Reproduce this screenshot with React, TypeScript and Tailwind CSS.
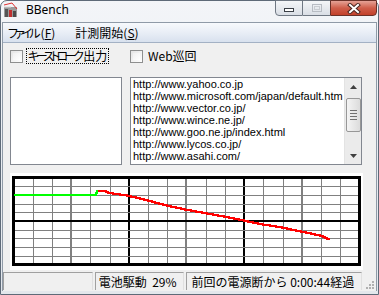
import React from 'react';

const urls = [
  'http://www.yahoo.co.jp',
  'http://www.microsoft.com/japan/default.htm',
  'http://www.vector.co.jp/',
  'http://www.wince.ne.jp/',
  'http://www.goo.ne.jp/index.html',
  'http://www.lycos.co.jp/',
  'http://www.asahi.com/',
  'http://www.nikkei.co.jp/',
];

const jp = "font-['Noto_Sans_CJK_JP','Noto_Sans',sans-serif]";

function stairs(pts: [number, number][]) {
  let d = `M${pts[0][0]} ${Math.round(pts[0][1])}`;
  let cy = Math.round(pts[0][1]);
  for (let i = 1; i < pts.length; i++) {
    const [x0, y0] = pts[i - 1];
    const [x1, y1] = pts[i];
    for (let x = Math.ceil(x0); x <= x1; x++) {
      const y = Math.round(y0 + ((y1 - y0) * (x - x0)) / (x1 - x0 || 1));
      if (y !== cy) {
        d += ` H${x} V${y}`;
        cy = y;
      }
    }
    d += ` H${x1}`;
  }
  return d;
}

const red: [number, number][] = [
  [86, 14.7], [92, 15], [97, 17], [115.7, 19.7], [136, 24.7], [155.3, 29.7], [173.7, 33.7],
  [193.7, 37.3], [212.7, 40.7], [232, 44.7], [251, 48.5], [270.3, 51.7], [289.3, 55.7],
  [308.7, 59.7], [317, 63.7],
];

function Chart() {
  const cols = Array.from({ length: 17 }, (_, i) => i + 1);
  const rows = Array.from({ length: 9 }, (_, i) => i + 1);
  return (
    <svg width="350" height="91" className="block" shapeRendering="crispEdges">
      {cols.map((k) => {
        const x = 1.5 + 19.22 * k;
        if (k % 6 === 0) return <line key={k} x1={Math.round(x)} x2={Math.round(x)} y1="0" y2="90" stroke="#000" strokeWidth="2" />;
        if (k % 3 === 0) return <line key={k} x1={Math.round(x)} x2={Math.round(x)} y1="0" y2="90" stroke="#808080" strokeWidth="2" />;
        return <line key={k} x1={Math.round(x) + 0.5} x2={Math.round(x) + 0.5} y1="0" y2="90" stroke="#808080" strokeWidth="1" />;
      })}
      {rows.map((k) => {
        const y = 1.5 + 8.7 * k;
        if (k === 5) return <line key={k} y1={Math.round(y)} y2={Math.round(y)} x1="0" x2="349" stroke="#000" strokeWidth="2" />;
        return <line key={k} y1={Math.round(y) + 0.5} y2={Math.round(y) + 0.5} x1="0" x2="349" stroke="#808080" strokeWidth="1" />;
      })}
      <rect x="1.5" y="1.5" width="346" height="87" fill="none" stroke="#000" strokeWidth="3" />
      <path d="M2 19 H84 V17 H85 V15 H86" fill="none" stroke="#00ff00" strokeWidth="2" />
      <path d={stairs(red)} fill="none" stroke="#ff0000" strokeWidth="2" />
    </svg>
  );
}

function CheckBox({ kana, rest, focus }: { kana: string; rest: string; focus?: boolean }) {
  return (
    <div className="flex items-center">
      <div className="w-[13px] h-[13px] border border-[#8e8f8f] bg-gradient-to-br from-[#e4e4e4] to-white p-[2px] shrink-0">
        <div className="w-full h-full bg-gradient-to-br from-[#f0f0f0] to-white" />
      </div>
      <span
        className={`ml-[4px] px-[1px] h-[14px] flex items-center text-[12px] leading-none text-black whitespace-nowrap [font-feature-settings:'palt'] ${jp} ${
          focus ? 'outline outline-1 outline-dotted outline-black' : ''
        }`}
      >
        <span className="tracking-[-3.5px]">{kana}</span>
        <span className={kana ? 'ml-[3px]' : ''}>{rest}</span>
      </span>
    </div>
  );
}

function AppIcon() {
  return (
    <svg width="16" height="16" viewBox="0 0 16 16">
      <rect x="1" y="5" width="13" height="10" fill="#9a9a9a" />
      <rect x="2" y="7" width="3" height="8" fill="#555" />
      <rect x="6" y="8" width="3" height="7" fill="#c03030" />
      <rect x="10" y="9" width="3" height="6" fill="#4a4a4a" />
      <path d="M1 3 L9 1 L14 7" fill="none" stroke="#e03030" strokeWidth="1" />
      <path d="M1 5 H8" stroke="#d8d8d8" strokeWidth="1" />
    </svg>
  );
}

export default function App() {
  return (
    <div className="w-[379px] h-[295px] overflow-hidden">
      <div className="w-full h-full flex flex-col border border-[#5e6a78] rounded-t-[7px] bg-gradient-to-b from-[#f3f5f8] via-[#e8ecf1] to-[#e3e7ec]">
        {/* title bar */}
        <div className="h-[21px] flex items-start shrink-0">
          <div className="ml-[2px] mt-[1px]">
            <AppIcon />
          </div>
          <span className="ml-[7px] mt-[2px] text-[12px] leading-[14px] text-black font-['Noto_Sans',sans-serif]">BBench</span>
          <div className="flex-1" />
          <div className="flex mr-[1px] mt-[-1px] h-[16px]">
            <div className="w-[28px] h-full border border-[#6f7883] rounded-bl-[4px] bg-gradient-to-b from-[#f4f6f8] to-[#d9dee5] flex items-end justify-center pb-[3px]">
              <div className="w-[10px] h-[4px] bg-white border border-[#3a3f46]" />
            </div>
            <div className="w-[27px] h-full border-y border-[#6f7883] bg-gradient-to-b from-[#f4f6f8] to-[#d9dee5] flex items-center justify-center">
              <div className="w-[10px] h-[8px] border border-[#b7bcc3] flex items-center justify-center">
                <div className="w-[6px] h-[4px] border border-[#c8ccd1]" />
              </div>
            </div>
            <div className="w-[47px] h-full border border-[#6a3128] rounded-br-[4px] bg-gradient-to-b from-[#e5a296] via-[#cf5e4a] to-[#c2402a] flex items-center justify-center">
              <svg width="14" height="11" viewBox="0 0 14 11">
                <path d="M3 2 L11 9 M11 2 L3 9" stroke="#4a2620" strokeWidth="4" strokeLinecap="square" />
                <path d="M3 2 L11 9 M11 2 L3 9" stroke="#fff" strokeWidth="2" strokeLinecap="square" />
              </svg>
            </div>
          </div>
        </div>

        {/* inner frame */}
        <div className="flex-1 mx-[1px] mb-[3px] flex flex-col border border-[#8f9aa7] border-b-0">
          {/* menu */}
          <div className={`h-[20px] shrink-0 flex items-center gap-[20px] pl-[5px] bg-gradient-to-b from-[#f7f9fc] via-[#e9eef6] to-[#d8e1ee] border-b border-[#a3b1c4] text-[12px] text-black [font-feature-settings:'palt'] ${jp}`}>
            <span className="whitespace-nowrap">
              <span className="tracking-[-3px]">ファイル</span>
              <span className="ml-[3px]">
                (<span className="underline">F</span>)
              </span>
            </span>
            <span className="whitespace-nowrap">
              計測開始(<span className="underline">S</span>)
            </span>
          </div>

          {/* client */}
          <div className="flex-1 bg-[#f0f0f0] flex flex-col pl-[7px] pt-[6px]">
            <div className="flex items-center h-[14px]">
              <div className="w-[120px]">
                <CheckBox kana="キーストローク" rest="出力" focus />
              </div>
              <CheckBox kana="" rest="Web巡回" />
            </div>

            <div className="flex gap-[8px] mt-[14px]">
              <div className="w-[112px] h-[88px] bg-white border border-[#828790]" />
              <div className="w-[232px] h-[88px] bg-white border border-[#828790] flex overflow-hidden">
                <div className="flex-1 overflow-hidden pl-[2px]">
                  {urls.map((u) => (
                    <div key={u} className="h-[12px] leading-[12px] text-[11px] text-black whitespace-nowrap font-['Liberation_Sans',sans-serif]">
                      {u}
                    </div>
                  ))}
                </div>
                <div className="w-[17px] bg-[#ebebeb] border-l border-[#e3e3e3] flex flex-col items-center">
                  <div className="h-[17px] flex items-center justify-center">
                    <svg width="7" height="4" viewBox="0 0 7 4">
                      <path d="M3.5 0 L7 4 H0 Z" fill="#404040" />
                    </svg>
                  </div>
                  <div className="mt-[3px] w-[15px] h-[34px] rounded-[2px] border border-[#979797] bg-gradient-to-r from-[#f4f4f4] to-[#dcdcdc] flex flex-col items-center justify-center gap-[2px]">
                    <div className="w-[7px] h-[1px] bg-[#707070]" />
                    <div className="w-[7px] h-[1px] bg-[#707070]" />
                    <div className="w-[7px] h-[1px] bg-[#707070]" />
                    <div className="w-[7px] h-[1px] bg-[#707070]" />
                  </div>
                  <div className="flex-1" />
                  <div className="h-[17px] flex items-center justify-center">
                    <svg width="7" height="4" viewBox="0 0 7 4">
                      <path d="M0 0 H7 L3.5 4 Z" fill="#404040" />
                    </svg>
                  </div>
                </div>
              </div>
            </div>

            <div className="mt-[8px] w-[353px] h-[97px] bg-white pl-[2px] pt-[3px]">
              <Chart />
            </div>

            <div className="flex-1" />
          </div>

          {/* status bar */}
          <div className={`h-[19px] shrink-0 bg-[#f0f0f0] flex items-stretch gap-[2px] pb-[1px] text-[12px] text-black ${jp}`}>
            <div className="w-[90px] border-t border-l border-[#a0a0a0] border-r border-r-[#e0e0e0]" />
            <div className="w-[89px] border-t border-l border-[#a0a0a0] border-r border-r-[#e0e0e0] flex items-center pl-[3px] whitespace-nowrap">
              電池駆動&nbsp;&nbsp;29%
            </div>
            <div className="w-[177px] border-t border-l border-[#a0a0a0] border-r border-r-[#e0e0e0] flex items-center pl-[5px] whitespace-nowrap">
              前回の電源断から 0:00:44経過
            </div>
            <div className="flex-1 flex items-end justify-end pr-[2px] pb-[1px]">
              <svg width="10" height="10" viewBox="0 0 10 10">
                {[
                  [8, 2], [8, 5], [5, 5], [8, 8], [5, 8], [2, 8],
                ].map(([x, y]) => (
                  <rect key={`${x}-${y}`} x={x} y={y} width="2" height="2" fill="#b0b0b0" />
                ))}
              </svg>
            </div>
          </div>
        </div>
      </div>
    </div>
  );
}
